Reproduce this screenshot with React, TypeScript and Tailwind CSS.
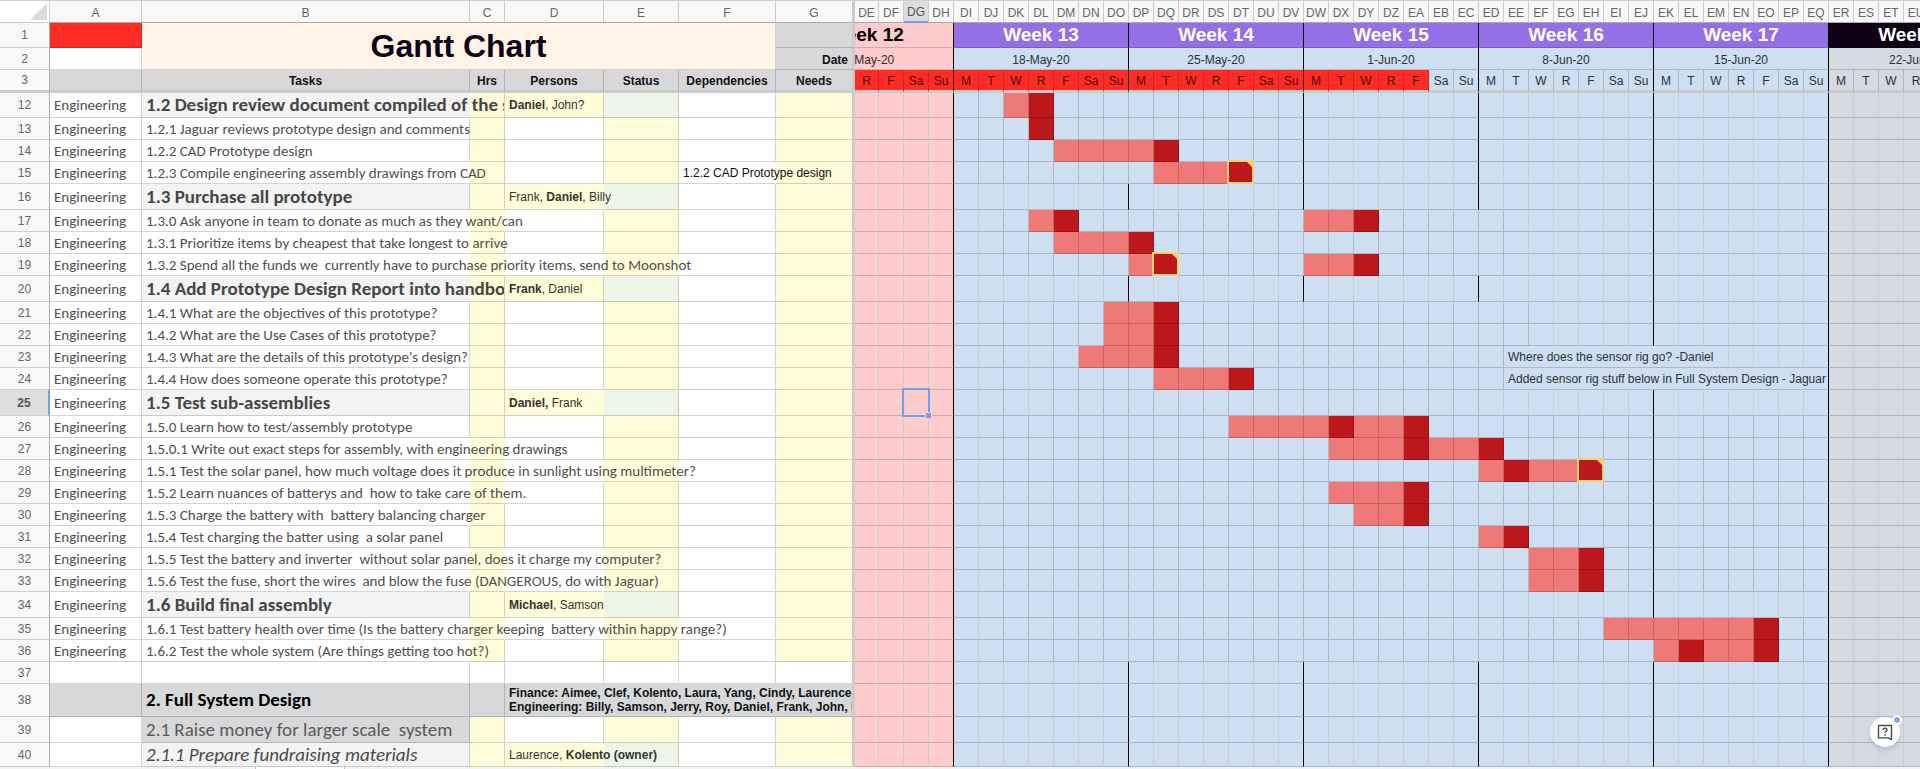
import type { ReactNode } from "react";

const WHITE = "bg-white";
const GREY = "bg-[#d7d8da]";
const SOFT = "bg-[#f3f3f3]";
const YELLOW = "bg-[#fffcd9]";
const GREEN = "bg-[#edf5e9]";
const PINK = "bg-[#fecccc]";
const BLUE = "bg-[#cddff0]";
const SLATE = "bg-[#d5dae2]";
const LIGHT_BAR = "bg-[#ef7976]";
const DARK_BAR = "bg-[#bc181c]";
const RED = "bg-[#ff2c24]";

const V_TINT = "border-r border-r-black/17";
const V_PLAIN = "border-r border-r-[#cccccc]";
const V_WEEK = "border-r border-r-black";
const V_NONE = "border-r border-r-transparent";
const V_FREEZE = "border-r-[3px] border-r-[#cbcbcb]";
const H_TINT = "border-b border-b-black/17";
const H_FREEZE = "border-b-[3px] border-b-[#cbcbcb]";

const ARIAL = "font-['Liberation_Sans',Arial,sans-serif]";
const CALIBRI = "font-[Carlito,Calibri,Lato,sans-serif]";

const DAYS = ["M", "T", "W", "R", "F", "Sa", "Su"];
const FIRST = 108; // sheet index of column DE (A = 0)
const DATE_COLUMNS = Array.from({ length: 46 }, (_, i) => i);

function columnName(i: number): string {
  const n = i + FIRST;
  return String.fromCharCode(64 + Math.floor(n / 26)) + String.fromCharCode(65 + (n % 26));
}

function dateIndex(name: string): number {
  return (name.charCodeAt(0) - 64) * 26 + name.charCodeAt(1) - 65 - FIRST;
}

type Kind = "task" | "group" | "blank" | "section" | "raised" | "sub";

interface Row {
  n: number;
  kind: Kind;
  text?: string;
  persons?: ReactNode;
  dependency?: string;
  /** columns whose right gridline is covered by overflowing text */
  over?: string;
  /** "start:pattern" where l = planned day, d = due day, n = due day with a note */
  bars?: string[];
}

const ROWS: Row[] = [
  { n: 12, kind: "group", text: "1.2 Design review document compiled of the s", persons: <><b>Daniel</b>, John?</>, over: "B", bars: ["DK:ld"] },
  { n: 13, kind: "task", text: "1.2.1 Jaguar reviews prototype design and comments", bars: ["DL:d"] },
  { n: 14, kind: "task", text: "1.2.2 CAD Prototype design", bars: ["DM:lllld"] },
  { n: 15, kind: "task", text: "1.2.3 Compile engineering assembly drawings from CAD", dependency: "1.2.2 CAD Prototype design", over: "BF", bars: ["DQ:llln"] },
  { n: 16, kind: "group", text: "1.3 Purchase all prototype", persons: <>Frank, <b>Daniel</b>, Billy</>, over: "D" },
  { n: 17, kind: "task", text: "1.3.0 Ask anyone in team to donate as much as they want/can", over: "BC", bars: ["DL:ld", "DW:lld"] },
  { n: 18, kind: "task", text: "1.3.1 Prioritize items by cheapest that take longest to arrive", over: "B", bars: ["DM:llld"] },
  { n: 19, kind: "task", text: "1.3.2 Spend all the funds we  currently have to purchase priority items, send to Moonshot", over: "BCDE", bars: ["DP:ln", "DW:lld"] },
  { n: 20, kind: "group", text: "1.4 Add Prototype Design Report into handboo", persons: <><b>Frank</b>, Daniel</>, over: "B" },
  { n: 21, kind: "task", text: "1.4.1 What are the objectives of this prototype?", bars: ["DO:lld"] },
  { n: 22, kind: "task", text: "1.4.2 What are the Use Cases of this prototype?", bars: ["DO:lld"] },
  { n: 23, kind: "task", text: "1.4.3 What are the details of this prototype's design?", bars: ["DN:llld"] },
  { n: 24, kind: "task", text: "1.4.4 How does someone operate this prototype?", bars: ["DQ:llld"] },
  { n: 25, kind: "group", text: "1.5 Test sub-assemblies", persons: <><b>Daniel,</b> Frank</>, over: "D" },
  { n: 26, kind: "task", text: "1.5.0 Learn how to test/assembly prototype", bars: ["DT:lllldlld"] },
  { n: 27, kind: "task", text: "1.5.0.1 Write out exact steps for assembly, with engineering drawings", over: "BC", bars: ["DX:llldlld"] },
  { n: 28, kind: "task", text: "1.5.1 Test the solar panel, how much voltage does it produce in sunlight using multimeter?", over: "BCDE", bars: ["ED:ldlln"] },
  { n: 29, kind: "task", text: "1.5.2 Learn nuances of batterys and  how to take care of them.", over: "BC", bars: ["DX:llld"] },
  { n: 30, kind: "task", text: "1.5.3 Charge the battery with  battery balancing charger", over: "B", bars: ["DY:lld"] },
  { n: 31, kind: "task", text: "1.5.4 Test charging the batter using  a solar panel", bars: ["ED:ld"] },
  { n: 32, kind: "task", text: "1.5.5 Test the battery and inverter  without solar panel, does it charge my computer?", over: "BCD", bars: ["EF:lld"] },
  { n: 33, kind: "task", text: "1.5.6 Test the fuse, short the wires  and blow the fuse (DANGEROUS, do with Jaguar)", over: "BCD", bars: ["EF:lld"] },
  { n: 34, kind: "group", text: "1.6 Build final assembly", persons: <><b>Michael</b>, Samson</>, over: "D" },
  { n: 35, kind: "task", text: "1.6.1 Test battery health over time (Is the battery charger keeping  battery within happy range?)", over: "BCDE", bars: ["EI:lllllld"] },
  { n: 36, kind: "task", text: "1.6.2 Test the whole system (Are things getting too hot?)", over: "B", bars: ["EK:ldlld"] },
  { n: 37, kind: "blank" },
  { n: 38, kind: "section", text: "2. Full System Design" },
  { n: 39, kind: "raised", text: "2.1 Raise money for larger scale  system" },
  { n: 40, kind: "sub", text: "2.1.1 Prepare fundraising materials", persons: <>Laurence, <b>Kolento (owner)</b></>, over: "D" },
];

const ROW_HEIGHT: Record<Kind, string> = {
  task: "h-[22px]",
  blank: "h-[22px]",
  group: "h-[26px]",
  section: "h-[33px]",
  raised: "h-[26px]",
  sub: "h-[24px]",
};

const REMARKS: Record<number, { text: string; until: string }> = {
  23: { text: "Where does the sensor rig go? -Daniel", until: "EL" },
  24: { text: "Added sensor rig stuff below in Full System Design - Jaguar", until: "EP" },
};

/** Right gridline of date column i in sheet row n. */
function dateEdge(n: number, i: number): string {
  const remark = REMARKS[n];
  if (remark && i >= dateIndex("EE") && i <= dateIndex(remark.until)) return V_NONE;
  if (i === 3 || i === 38) return V_WEEK;
  if (i < 3 || i > 38) return V_PLAIN;
  const weekEnd = (i - 3) % 7 === 0;
  if (n === 16 || n === 20 || n > 36) return weekEnd ? V_WEEK : V_PLAIN;
  if (i === 31 && n < 35) return V_WEEK;
  if (n < 16) {
    if (i === 17 || i === 24) return V_WEEK;
    return i < 17 ? V_TINT : V_PLAIN;
  }
  if (i === 4 || i === 32) return V_PLAIN;
  if (n < 20) return i <= 25 ? V_TINT : V_PLAIN;
  if (n < 26) return i === 6 || i > (n === 25 ? 24 : 26) ? V_PLAIN : V_TINT;
  if (n === 34) return i <= 25 ? V_TINT : V_PLAIN;
  return V_TINT;
}

function barMap(bars: string[] = []): Record<number, string> {
  const map: Record<number, string> = {};
  for (const bar of bars) {
    const [start, pattern] = bar.split(":");
    [...pattern].forEach((c, k) => (map[dateIndex(start) + k] = c));
  }
  return map;
}

function Note() {
  return (
    <span className="absolute -top-0.5 -right-px -bottom-px -left-0.5 border-2 border-[#f6d172]">
      <svg viewBox="0 0 5 5" className="absolute top-0 right-0 size-[5px]" aria-hidden="true">
        <path d="M0 0H5V5Z" fill="#f6d172" />
      </svg>
    </span>
  );
}

function Selection() {
  return (
    <span className="absolute -inset-0.5 border-2 border-[#70a2e2]">
      <span className="absolute -right-[4px] -bottom-[4px] size-[7px] border border-[#fecccc] bg-[#70a2e2]" />
    </span>
  );
}

function DateCells({ row }: { row: Row }) {
  const bars = barMap(row.bars);
  const remark = REMARKS[row.n];
  return (
    <>
      {DATE_COLUMNS.map((i) => {
        const bar = bars[i];
        const selected = row.n === 25 && i === 2;
        const fill = bar ? (bar === "l" ? LIGHT_BAR : DARK_BAR) : i < 4 ? PINK : i < 39 ? BLUE : SLATE;
        const edge = bar ? V_TINT : dateEdge(row.n, i);
        return (
          <td key={i} className={`p-0 ${fill} ${edge} ${H_TINT} ${bar === "n" || selected ? "relative" : ""}`}>
            {bar === "n" && <Note />}
            {selected && <Selection />}
            {remark && i === dateIndex("EE") && (
              <div className="w-0 pl-1 text-[12px] leading-4 whitespace-nowrap text-[#2b3238]">{remark.text}</div>
            )}
          </td>
        );
      })}
    </>
  );
}

function RowNumber({ n, last = "" }: { n: number; last?: string }) {
  const active = n === 25;
  return (
    <th
      scope="row"
      className={`p-0 text-center text-[12px] leading-4 ${last || "border-b border-b-[#cfcfcf]"} ${
        active
          ? "border-r-2 border-r-[#70a2e2] bg-[#dedede] font-bold text-[#555]"
          : "border-r border-r-[#adadad] bg-[#f8f8f8] font-normal text-[#666]"
      }`}
    >
      {n}
    </th>
  );
}

function SheetRow({ row }: { row: Row }) {
  const { kind, over = "" } = row;
  const edge = (c: string) => (over.includes(c) ? V_NONE : V_TINT);
  const headed = kind === "group" || kind === "sub";
  const tinted = kind !== "blank" && kind !== "section";
  const fills = {
    A: kind === "section" ? GREY : WHITE,
    B: kind === "section" || kind === "raised" ? GREY : headed ? SOFT : WHITE,
    C: kind === "section" ? GREY : tinted ? YELLOW : WHITE,
    D: headed ? YELLOW : WHITE,
    E: headed ? GREEN : tinted ? YELLOW : WHITE,
    G: tinted ? YELLOW : WHITE,
  };
  const textStyle: Record<Kind, string> = {
    task: "text-[15px] leading-5 text-[#505050]",
    blank: "text-[15px] leading-5",
    group: "text-[19px] leading-6 font-bold text-[#464646] w-[362px] overflow-hidden",
    section: "text-[19px] leading-6 font-bold text-black",
    raised: "text-[19px] leading-6 text-[#5a5a5a]",
    sub: "text-[19px] leading-[22px] italic text-[#4a4a4a]",
  };
  return (
    <tr className={row.n === 12 ? "h-[25px]" : ROW_HEIGHT[kind]}>
      <RowNumber n={row.n} />
      <td className={`p-0 pl-1 text-[15px] leading-5 text-[#505050] ${CALIBRI} ${fills.A} ${V_TINT} ${H_TINT}`}>
        {kind === "task" || kind === "group" ? "Engineering" : ""}
      </td>
      <td className={`p-0 ${CALIBRI} ${fills.B} ${edge("B")} ${H_TINT}`}>
        <div className={`pl-1 whitespace-pre ${textStyle[kind]}`}>{row.text}</div>
      </td>
      <td className={`p-0 ${fills.C} ${edge("C")} ${H_TINT}`} />
      {kind === "section" ? (
        <td colSpan={4} className={`overflow-hidden p-0 pl-1 text-[12px] leading-[14px] font-bold whitespace-nowrap text-[#111] ${GREY} ${V_FREEZE} ${H_TINT}`}>
          Finance: Aimee, Clef, Kolento, Laura, Yang, Cindy, Laurence
          <br />
          Engineering: Billy, Samson, Jerry, Roy, Daniel, Frank, John, R
        </td>
      ) : (
        <>
          <td className={`p-0 pl-1 text-[12px] leading-4 whitespace-nowrap text-[#333] ${fills.D} ${edge("D")} ${H_TINT}`}>{row.persons}</td>
          <td className={`p-0 ${fills.E} ${edge("E")} ${H_TINT}`} />
          <td className={`p-0 pl-1 text-[12px] leading-4 whitespace-nowrap text-[#111] ${WHITE} ${edge("F")} ${H_TINT}`}>{row.dependency}</td>
          <td className={`p-0 ${fills.G} ${V_FREEZE} ${H_TINT}`} />
        </>
      )}
      <DateCells row={row} />
    </tr>
  );
}

const WEEKS = [
  { title: "Week 13", date: "18-May-20" },
  { title: "Week 14", date: "25-May-20" },
  { title: "Week 15", date: "1-Jun-20" },
  { title: "Week 16", date: "8-Jun-20" },
  { title: "Week 17", date: "15-Jun-20" },
  { title: "Week 18", date: "22-Jun-20" },
];

const LEFT_LETTERS = ["A", "B", "C", "D", "E", "F", "G"];
const LEFT_TITLES = ["", "Tasks", "Hrs", "Persons", "Status", "Dependencies", "Needs"];

function ColumnLetters() {
  const base = "border-t border-t-[#cfcfcf] p-0 pt-0.5 text-center text-[12px] leading-4";
  const normal = "border-b border-b-[#a9a9a9] bg-[#f8f8f8] font-normal text-[#666]";
  return (
    <tr className="h-[23px]">
      <td className="border-t border-r border-b border-t-[#cfcfcf] border-r-[#cfcfcf] border-b-[#c4cfc4] bg-white p-0">
        <svg viewBox="0 0 17 17" className="mr-0.5 ml-auto size-[17px]" aria-hidden="true">
          <path d="M17 0V17H0Z" fill="#dcdcdc" />
        </svg>
      </td>
      {LEFT_LETTERS.map((c) => (
        <th key={c} scope="col" className={`${base} ${normal} ${c === "G" ? V_FREEZE : "border-r border-r-[#cbccd2]"}`}>
          {c}
        </th>
      ))}
      {DATE_COLUMNS.map((i) => (
        <th
          key={i}
          scope="col"
          className={`${base} border-r border-r-[#cbccd2] ${i === 2 ? "border-b-2 border-b-[#70a2e2] bg-[#dedede] font-normal text-[#555]" : normal}`}
        >
          {columnName(i)}
        </th>
      ))}
    </tr>
  );
}

function FrozenRows() {
  return (
    <>
      <tr className="h-[25px]">
        <RowNumber n={1} />
        <td className={`p-0 ${RED} ${V_TINT} ${H_TINT}`} />
        <td colSpan={5} rowSpan={2} className="border-r border-b border-r-[#d8cfc4] border-b-[#d8cfc4] bg-[#fff4e6] p-0 text-center text-[#0d0217]">
          <h1 className="text-[32px] leading-9 font-bold">Gantt Chart</h1>
        </td>
        <td className={`p-0 ${GREY} ${V_FREEZE} ${H_TINT}`} />
        <td colSpan={4} className={`overflow-hidden p-0 text-[19px] leading-6 font-bold text-black ${PINK} ${V_WEEK} ${H_TINT}`}>
          <div className="flex justify-end">
            <div className="w-[174px] shrink-0 text-center">Week 12</div>
          </div>
        </td>
        {WEEKS.map((w, k) => (
          <td
            key={w.title}
            colSpan={7}
            className={`p-0 text-center text-[19px] leading-6 font-bold text-white ${k === 5 ? "bg-[#0f0014]" : "bg-[#956fe6]"} ${V_WEEK} ${H_TINT}`}
          >
            {w.title}
          </td>
        ))}
      </tr>
      <tr className="h-[22px]">
        <RowNumber n={2} />
        <td className={`p-0 ${WHITE} ${V_TINT} ${H_TINT}`} />
        <td className={`p-0 pt-0.5 pr-1 text-right text-[12px] leading-4 font-bold text-[#111] ${GREY} ${V_FREEZE} ${H_TINT}`}>Date</td>
        <td colSpan={4} className={`overflow-hidden p-0 pt-0.5 text-[12px] leading-4 text-[#3a2626] ${PINK} ${V_WEEK} ${H_TINT}`}>
          <div className="flex justify-end">
            <div className="w-[174px] shrink-0 text-center">11-May-20</div>
          </div>
        </td>
        {WEEKS.map((w, k) => (
          <td key={w.date} colSpan={7} className={`p-0 pt-0.5 text-center text-[12px] leading-4 text-[#2b3238] ${k === 5 ? SLATE : BLUE} ${V_WEEK} ${H_TINT}`}>
            {w.date}
          </td>
        ))}
      </tr>
      <tr className="h-[23px]">
        <RowNumber n={3} last={H_FREEZE} />
        {LEFT_TITLES.map((t, k) => (
          <th key={k} className={`p-0 pt-0.5 text-center text-[12px] leading-4 font-bold text-[#111] ${GREY} ${k === 6 ? V_FREEZE : V_TINT} ${H_FREEZE}`}>
            {t}
          </th>
        ))}
        {DATE_COLUMNS.map((i) => {
          const red = i <= 22;
          const fill = red ? RED : i < 39 ? BLUE : SLATE;
          const weekEnd = (i - 3) % 7 === 0;
          return (
            <td key={i} className={`p-0 pt-0.5 text-center text-[12px] leading-4 ${red ? "text-[#4d0907]" : "text-[#2b3238]"} ${fill} ${weekEnd ? V_WEEK : V_TINT} ${H_FREEZE}`}>
              {DAYS[(i + 3) % 7]}
            </td>
          );
        })}
      </tr>
    </>
  );
}

function HelpButton() {
  return (
    <button
      type="button"
      aria-label="Help"
      className="absolute right-5 bottom-[22px] flex size-[30px] items-center justify-center rounded-full bg-white shadow-md"
    >
      <svg viewBox="0 0 16 17" className="h-[17px] w-4" fill="none" stroke="#454b50" aria-hidden="true">
        <path d="M1.5 1.5h13v14l-3.4-1.6H1.5Z" strokeWidth="1.4" strokeLinejoin="round" />
        <path d="M6 6.1c0-1.2.9-1.9 2-1.9s2 .7 2 1.8c0 1.4-2 1.5-2 3.1" strokeWidth="1.4" />
        <path d="M8 10.3v1.5" strokeWidth="1.5" />
      </svg>
      <span className="absolute -top-0.5 -right-0.5 size-2.5 rounded-full border-2 border-white bg-[#84aee8]" />
    </button>
  );
}

export default function App() {
  return (
    <main className={`relative w-full overflow-hidden bg-white ${ARIAL}`}>
      <table className="w-[2004px] table-fixed border-separate border-spacing-0">
        <colgroup>
          <col className="w-[50px]" />
          <col className="w-[92px]" />
          <col className="w-[328px]" />
          <col className="w-[35px]" />
          <col className="w-[99px]" />
          <col className="w-[75px]" />
          <col className="w-[97px]" />
          <col className="w-[79px]" />
          {DATE_COLUMNS.map((i) => (
            <col key={i} className={i === 0 ? "w-[24px]" : "w-[25px]"} />
          ))}
        </colgroup>
        <thead>
          <ColumnLetters />
          <FrozenRows />
        </thead>
        <tbody>
          {ROWS.map((row) => (
            <SheetRow key={row.n} row={row} />
          ))}
        </tbody>
      </table>
      <footer className="flex h-0.5 bg-[#f3f3f3]">
        <div className="ml-[255px] w-[90px] border-x border-[#bdbdbd] bg-white" />
      </footer>
      <HelpButton />
    </main>
  );
}
